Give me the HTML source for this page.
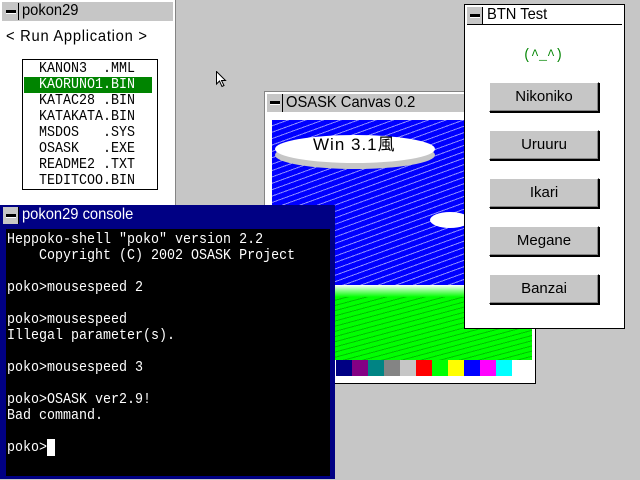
<!DOCTYPE html>
<html><head><meta charset="utf-8"><style>
*{margin:0;padding:0;box-sizing:border-box}
body{width:640px;height:480px;background:#c6c6c6;position:relative;overflow:hidden;font-family:"Liberation Mono","Noto Sans CJK JP",monospace;}
.a{position:absolute}
.mono{font-family:"Liberation Mono","Noto Sans CJK JP",monospace;font-size:15px;line-height:16px;white-space:pre;transform:scaleX(0.889);transform-origin:0 0}
.cb{position:absolute;width:16px;height:17px;background:#c6c6c6;border-right:1px solid #000}
.cb:after{content:"";position:absolute;left:3px;top:7px;width:10px;height:3px;background:#000;border:1px solid #fff;border-width:0 0 1px 0}
.btn{position:absolute;left:489px;width:110px;height:30px;background:#c6c6c6;border:1px solid #000;border-top-color:#fff;border-left-color:#fff;box-shadow:1px 1px 0 #000, inset -1px -1px 0 #848484;text-align:center;line-height:28px;font-family:"Liberation Sans",sans-serif;font-size:15px;color:#000}
.t{font-family:'Liberation Sans',sans-serif;font-size:16px;line-height:20px;transform:scaleX(0.92);transform-origin:0 0;white-space:pre}
</style></head><body>
<div class="a" style="left:0;top:0;width:176px;height:206px;background:#fff;border-right:1px solid #848484"></div>
<div class="a" style="left:2px;top:2px;width:171px;height:19px;background:#c6c6c6"></div>
<div class="cb" style="left:3px;top:3px"></div>
<div class="a t" style="left:22px;top:1px">pokon29</div>
<div class="a t" style="left:6px;top:27px;letter-spacing:0.8px">&lt; Run Application &gt;</div>
<div class="a" style="left:22px;top:59px;width:136px;height:131px;border:1px solid #000"></div>
<div class="a" style="left:24px;top:77px;width:128px;height:16px;background:#008400"></div>
<div class="a mono" style="left:39px;top:61px;color:#000">KANON3  .MML
<span style="color:#fff">KAORUNO1.BIN</span>
KATAC28 .BIN
KATAKATA.BIN
MSDOS   .SYS
OSASK   .EXE
README2 .TXT
TEDITCOO.BIN</div>
<svg class="a" style="left:216px;top:71px" width="12" height="18"><path d="M0.5 0.5 L0.5 13 L3.5 10 L6 15.5 L8 14.5 L5.5 9.5 L9.5 9.5 Z" fill="#fff" stroke="#000"/></svg>
<div class="a" style="left:264px;top:91px;width:272px;height:293px;background:#fff;border:1px solid #848484;border-right-color:#000;border-bottom-color:#000"></div>
<div class="a" style="left:267px;top:94px;width:200px;height:18px;background:#c6c6c6"></div>
<div class="cb" style="left:267px;top:94px;height:18px"></div>
<div class="a t" style="left:286px;top:93px">OSASK Canvas 0.2</div>
<div class="a" style="left:272px;top:120px;width:260px;height:172px;background:#0000ff;background-image:repeating-linear-gradient(160deg,transparent 0 5px,rgba(255,255,255,.55) 5px 6px)"></div>
<div class="a" style="left:275px;top:135px;width:160px;height:28px;background:#fff;border-radius:50%;box-shadow:0 6px 0 #c6c6c6"></div>
<div class="a" style="left:430px;top:212px;width:40px;height:16px;background:#fff;border-radius:50%"></div>
<div class="a" style="left:313px;top:134px;font-family:'Liberation Sans','Noto Sans CJK JP',sans-serif;font-size:17px;line-height:22px;letter-spacing:1px">Win 3.1風</div>
<div class="a" style="left:272px;top:285px;width:260px;height:12px;background:linear-gradient(#fff,#00ff00)"></div>
<div class="a" style="left:272px;top:297px;width:260px;height:63px;background:#00ff00;background-image:repeating-linear-gradient(165deg,transparent 0 4px,rgba(0,132,0,.5) 4px 5px)"></div>
<div class="a" style="left:336px;top:360px;width:176px;height:16px;background:linear-gradient(90deg,#000084 0 16px,#840084 16px 32px,#008484 32px 48px,#848484 48px 64px,#c6c6c6 64px 80px,#f00 80px 96px,#0f0 96px 112px,#ff0 112px 128px,#00f 128px 144px,#f0f 144px 160px,#0ff 160px 176px)"></div>
<div class="a" style="left:464px;top:4px;width:161px;height:325px;background:#fff;border:1px solid #000"></div>
<div class="a" style="left:467px;top:7px;width:155px;height:18px;border-bottom:1px solid #000"></div>
<div class="cb" style="left:467px;top:7px;height:17px"></div>
<div class="a t" style="left:487px;top:5px">BTN Test</div>
<div class="a mono" style="left:523px;top:48px;color:#008400">(^_^)</div>
<div class="btn" style="top:82px">Nikoniko</div>
<div class="btn" style="top:130px">Uruuru</div>
<div class="btn" style="top:178px">Ikari</div>
<div class="btn" style="top:226px">Megane</div>
<div class="btn" style="top:274px">Banzai</div>
<div class="a" style="left:0;top:205px;width:335px;height:274px;background:#000084"></div>
<div class="cb" style="left:3px;top:207px;height:17px;border-right:1px solid #000"></div>
<div class="a t" style="left:22px;top:205px;color:#fff">pokon29 console</div>
<div class="a" style="left:6px;top:229px;width:324px;height:247px;background:#000"></div>
<div class="a mono" style="left:7px;top:232px;color:#fff">Heppoko-shell "poko" version 2.2
    Copyright (C) 2002 OSASK Project

poko>mousespeed 2

poko>mousespeed
Illegal parameter(s).

poko>mousespeed 3

poko>OSASK ver2.9!
Bad command.

poko><span style="background:#fff"> </span></div>
</body></html>
